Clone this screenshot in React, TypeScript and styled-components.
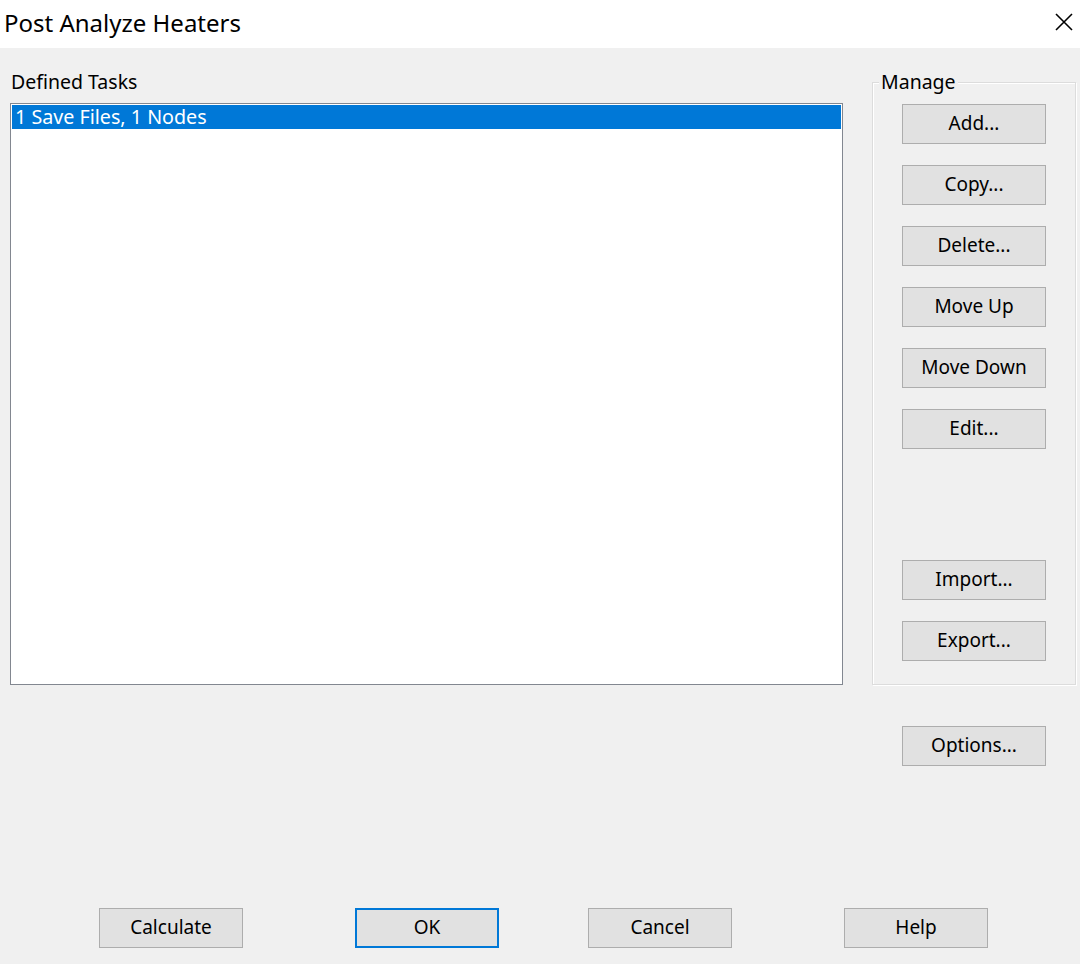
import React from 'react';
import styled, { createGlobalStyle, css } from 'styled-components';

const GlobalStyle = createGlobalStyle`
  html, body {
    margin: 0;
    padding: 0;
    background: #f0f0f0;
  }
  body {
    font-family: "Noto Sans", "Open Sans", Arial, sans-serif;
    color: #000;
  }
`;

const Window = styled.div`
  width: 1080px;
  height: 964px;
  display: flex;
  flex-direction: column;
  background: #f0f0f0;
  overflow: hidden;
`;

const TitleBar = styled.div`
  height: 48px;
  flex-shrink: 0;
  background: #ffffff;
  display: flex;
  align-items: center;
  justify-content: space-between;
  padding: 0 7px 0 4px;
  box-sizing: border-box;
`;

const Title = styled.div`
  font-size: 24px;
  padding-bottom: 4px;
`;

const CloseButton = styled.div`
  width: 18px;
  height: 18px;
  margin-top: -4px;
  display: flex;
`;

const Body = styled.div`
  flex: 1;
  display: flex;
  flex-direction: column;
  padding: 0 4px 16px 10px;
`;

const Main = styled.div`
  display: flex;
  gap: 29px;
`;

const LeftColumn = styled.div`
  display: flex;
  flex-direction: column;
  width: 833px;
`;

const Caption = styled.div`
  font-size: 19.5px;
  height: 24px;
  line-height: 24px;
  margin-top: 22px;
  margin-bottom: 9px;
  padding-left: 1px;
`;

const ListBox = styled.div`
  height: 582px;
  background: #ffffff;
  border: 1px solid #828790;
  box-sizing: border-box;
  padding: 1px;
`;

const ListItem = styled.div<{ $selected?: boolean }>`
  height: 24px;
  line-height: 24px;
  font-size: 19.7px;
  padding-left: 3px;
  white-space: nowrap;
  ${(p) =>
    p.$selected &&
    css`
      background: #0078d7;
      color: #ffffff;
    `}
`;

const RightColumn = styled.div`
  width: 204px;
  display: flex;
  flex-direction: column;
`;

const GroupBox = styled.div`
  position: relative;
  margin-top: 34px;
  height: 603px;
  box-sizing: border-box;
  border: 1px solid #dcdcdc;
  box-shadow: inset 1px 1px 0 #ffffff, 1px 1px 0 #ffffff;
  padding: 21px 0 0 29px;
  display: flex;
  flex-direction: column;
  gap: 21px;
`;

const Legend = styled.span`
  position: absolute;
  top: -13px;
  left: 6px;
  padding: 0 2px;
  background: #f0f0f0;
  font-size: 19.5px;
  line-height: 24px;
`;

const Spacer = styled.div<{ $h: number }>`
  height: ${(p) => p.$h}px;
  margin-top: -21px;
`;

const Button = styled.button<{ $default?: boolean; $left?: number }>`
  width: 144px;
  height: 40px;
  flex-shrink: 0;
  box-sizing: border-box;
  margin: 0;
  margin-left: ${(p) => p.$left ?? 0}px;
  padding: 0 0 2px;
  background: #e1e1e1;
  border: 1px solid #adadad;
  border-radius: 0;
  font-family: "Noto Sans", "Open Sans", Arial, sans-serif;
  font-size: 19px;
  color: #000;
  ${(p) =>
    p.$default &&
    css`
      border: 2px solid #0078d7;
    `}
`;

const OptionsRow = styled.div`
  padding: 41px 0 0 30px;
`;

const Footer = styled.div`
  margin-top: auto;
  display: flex;
`;

const manageButtons = ['Add...', 'Copy...', 'Delete...', 'Move Up', 'Move Down', 'Edit...'];

const CloseIcon = () => (
  <svg width="18" height="18" viewBox="0 0 18 18">
    <path d="M1 1 L17 17 M17 1 L1 17" stroke="#000" strokeWidth="1.6" fill="none" />
  </svg>
);

const App: React.FC = () => {
  return (
    <Window>
      <GlobalStyle />
      <TitleBar>
        <Title>Post Analyze Heaters</Title>
        <CloseButton>
          <CloseIcon />
        </CloseButton>
      </TitleBar>
      <Body>
        <Main>
          <LeftColumn>
            <Caption>Defined Tasks</Caption>
            <ListBox>
              <ListItem $selected>1 Save Files, 1 Nodes</ListItem>
            </ListBox>
          </LeftColumn>
          <RightColumn>
            <GroupBox>
              <Legend>Manage</Legend>
              {manageButtons.map((label) => (
                <Button key={label}>{label}</Button>
              ))}
              <Spacer $h={90} />
              <Button>Import...</Button>
              <Button>Export...</Button>
            </GroupBox>
            <OptionsRow>
              <Button>Options...</Button>
            </OptionsRow>
          </RightColumn>
        </Main>
        <Footer>
          <Button $left={89}>Calculate</Button>
          <Button $default $left={112}>OK</Button>
          <Button $left={89}>Cancel</Button>
          <Button $left={112}>Help</Button>
        </Footer>
      </Body>
    </Window>
  );
};

export default App;
